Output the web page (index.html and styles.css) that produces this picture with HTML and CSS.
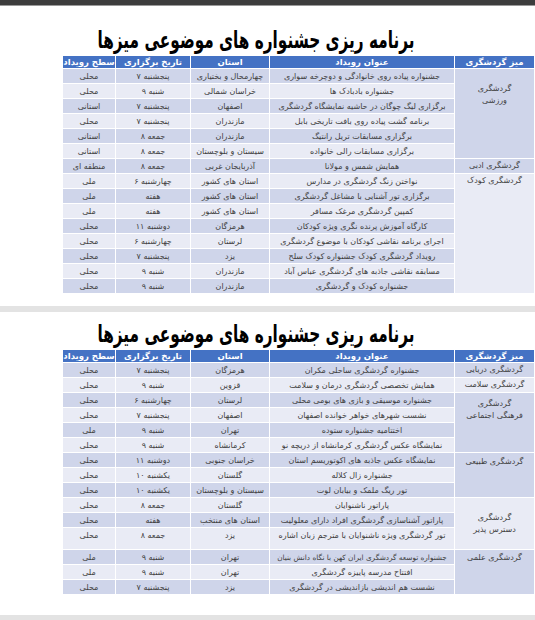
FILE: index.html
```html
<!DOCTYPE html>
<html lang="fa" dir="rtl">
<head>
<meta charset="utf-8">
<title>برنامه ریزی جشنواره های موضوعی میزها</title>
<link rel="stylesheet" href="styles.css">
</head>
<body>
<div class="topbar"></div>

<section class="sheet sheet-first">
  <h1 class="title">برنامه ریزی جشنواره های موضوعی میزها</h1>
  <table class="plan">
    <colgroup>
      <col class="c-desk"><col class="c-event"><col class="c-prov"><col class="c-date"><col class="c-level">
    </colgroup>
    <thead>
      <tr><th>میز گردشگری</th><th>عنوان رویداد</th><th>استان</th><th>تاریخ برگزاری</th><th>سطح رویداد</th></tr>
    </thead>
    <tbody>
      <tr class="odd"><td class="group g-pad14" rowspan="6">گردشگری<br>ورزشی</td><td>جشنواره پیاده روی خانوادگی و دوچرخه سواری</td><td>چهارمحال و بختیاری</td><td>پنجشنبه ۷</td><td>محلی</td></tr>
      <tr class="even"><td>جشنواره بادبادک ها</td><td>خراسان شمالی</td><td>شنبه ۹</td><td>محلی</td></tr>
      <tr class="odd"><td>برگزاری لیگ چوگان در حاشیه نمایشگاه گردشگری</td><td>اصفهان</td><td>پنجشنبه ۷</td><td>استانی</td></tr>
      <tr class="even"><td>برنامه گشت پیاده روی بافت تاریخی بابل</td><td>مازندران</td><td>پنجشنبه ۷</td><td>محلی</td></tr>
      <tr class="odd"><td>برگزاری مسابقات تریل رانتیگ</td><td>مازندران</td><td>جمعه ۸</td><td>استانی</td></tr>
      <tr class="even"><td>برگزاری مسابقات رالی خانواده</td><td>سیستان و بلوچستان</td><td>جمعه ۸</td><td>استانی</td></tr>
      <tr class="odd"><td class="group">گردشگری ادبی</td><td>همایش شمس و مولانا</td><td>آذربایجان غربی</td><td>جمعه ۸</td><td>منطقه ای</td></tr>
      <tr class="even"><td class="group g-pad0" rowspan="8">گردشگری کودک</td><td>نواختن زنگ گردشگری در مدارس</td><td>استان های کشور</td><td>چهارشنبه ۶</td><td>ملی</td></tr>
      <tr class="odd"><td>برگزاری تور آشنایی با مشاغل گردشگری</td><td>استان های کشور</td><td>هفته</td><td>ملی</td></tr>
      <tr class="even"><td>کمپین گردشگری مرغک مسافر</td><td>استان های کشور</td><td>هفته</td><td>ملی</td></tr>
      <tr class="odd"><td>کارگاه آموزش پرنده نگری ویژه کودکان</td><td>هرمزگان</td><td>دوشنبه ۱۱</td><td>محلی</td></tr>
      <tr class="even"><td>اجرای برنامه نقاشی کودکان با موضوع گردشگری</td><td>لرستان</td><td>چهارشنبه ۶</td><td>محلی</td></tr>
      <tr class="odd"><td>رویداد گردشگری کودک جشنواره کودک سلح</td><td>یزد</td><td>پنجشنبه ۷</td><td>محلی</td></tr>
      <tr class="even"><td>مسابقه نقاشی جاذبه های گردشگری عباس آباد</td><td>مازندران</td><td>شنبه ۹</td><td>محلی</td></tr>
      <tr class="odd"><td>جشنواره کودک و گردشگری</td><td>مازندران</td><td>شنبه ۹</td><td>محلی</td></tr>
    </tbody>
  </table>
</section>

<div class="sep"></div>

<section class="sheet sheet-second">
  <h1 class="title">برنامه ریزی جشنواره های موضوعی میزها</h1>
  <table class="plan">
    <colgroup>
      <col class="c-desk"><col class="c-event"><col class="c-prov"><col class="c-date"><col class="c-level">
    </colgroup>
    <thead>
      <tr><th>میز گردشگری</th><th>عنوان رویداد</th><th>استان</th><th>تاریخ برگزاری</th><th>سطح رویداد</th></tr>
    </thead>
    <tbody>
      <tr class="odd"><td class="group">گردشگری دریایی</td><td>جشنواره گردشگری ساحلی مکران</td><td>هرمزگان</td><td>پنجشنبه ۷</td><td>محلی</td></tr>
      <tr class="even"><td class="group">گردشگری سلامت</td><td>همایش تخصصی گردشگری درمان و سلامت</td><td>قزوین</td><td>شنبه ۹</td><td>محلی</td></tr>
      <tr class="odd"><td class="group g-pad5" rowspan="4">گردشگری<br>فرهنگی اجتماعی</td><td>جشنواره موسیقی و بازی های بومی محلی</td><td>لرستان</td><td>چهارشنبه ۶</td><td>محلی</td></tr>
      <tr class="even"><td>نشست شهرهای خواهر خوانده اصفهان</td><td>اصفهان</td><td>پنجشنبه ۷</td><td>محلی</td></tr>
      <tr class="odd"><td>اختتامیه جشنواره ستوده</td><td>تهران</td><td>شنبه ۹</td><td>ملی</td></tr>
      <tr class="even"><td>نمایشگاه عکس گردشگری کرمانشاه از دریچه نو</td><td>کرمانشاه</td><td>شنبه ۹</td><td>محلی</td></tr>
      <tr class="odd"><td class="group g-pad3" rowspan="3">گردشگری طبیعی</td><td>نمایشگاه عکس جاذبه های اکوتوریسم استان</td><td>خراسان جنوبی</td><td>دوشنبه ۱۱</td><td>محلی</td></tr>
      <tr class="even"><td>جشنواره زال کلاله</td><td>گلستان</td><td>یکشنبه ۱۰</td><td>محلی</td></tr>
      <tr class="odd"><td>تور ریگ ملمک و بیابان لوت</td><td>سیستان و بلوچستان</td><td>یکشنبه ۱۰</td><td>محلی</td></tr>
      <tr class="even"><td class="group g-mid" rowspan="3">گردشگری<br>دسترس پذیر</td><td>پاراتور ناشنوایان</td><td>گلستان</td><td>جمعه ۸</td><td>محلی</td></tr>
      <tr class="odd"><td>پاراتور آشناسازی گردشگری افراد دارای معلولیت</td><td>استان های منتخب</td><td>هفته</td><td>محلی</td></tr>
      <tr class="even tall"><td class="top">تور گردشگری ویژه ناشنوایان با مترجم زبان اشاره</td><td class="top">یزد</td><td class="top">جمعه ۸</td><td class="top">محلی</td></tr>
      <tr class="odd"><td class="group g-pad2" rowspan="3">گردشگری علمی</td><td class="tight">جشنواره توسعه گردشگری ایران کهن با نگاه دانش بنیان</td><td>تهران</td><td>شنبه ۹</td><td>ملی</td></tr>
      <tr class="even"><td>افتتاح مدرسه پاییزه گردشگری</td><td>تهران</td><td>شنبه ۹</td><td>ملی</td></tr>
      <tr class="odd"><td>نشست هم اندیشی بازاندیشی در گردشگری</td><td>یزد</td><td>پنجشنبه ۷</td><td>محلی</td></tr>
    </tbody>
  </table>
</section>

<div class="sep sep-bottom"></div>
</body>
</html>
```

FILE: styles.css
```css
html, body {
  margin: 0;
  padding: 0;
  background: #ffffff;
}

body {
  font-family: "DejaVu Sans", "Noto Sans", sans-serif;
  color: #404040;
}

.topbar {
  height: 5px;
  background: #3d3d3d;
  border-bottom: 1px solid #9a9a9a;
}

.sheet {
  display: flex;
  flex-direction: column;
  align-items: flex-start;
}

.sheet-first {
  padding-top: 20px;
  padding-bottom: 12px;
}

.sheet-second {
  padding-top: 8px;
  padding-bottom: 20px;
}

.title {
  align-self: stretch;
  margin: 0 23px 0 0;
  text-align: center;
  font-family: "DejaVu Sans Condensed", "DejaVu Sans", sans-serif;
  font-size: 17px;
  line-height: 29px;
  font-weight: bold;
  color: #000000;
  direction: rtl;
  white-space: nowrap;
  transform: scale(1, 1.4);
}

.plan {
  margin-left: 25px;
  width: 472px;
  table-layout: fixed;
  border-collapse: collapse;
  direction: rtl;
  font-size: 8px;
}

.c-desk { width: 80px; }
.c-event { width: 185px; }
.c-prov { width: 79px; }
.c-date { width: 75px; }
.c-level { width: 53px; }

.plan th {
  background: #4472c4;
  color: #ffffff;
  font-weight: bold;
  font-size: 8.5px;
  height: 12px;
  padding: 0;
  border: 1px solid #ffffff;
  text-align: center;
  line-height: 11px;
  white-space: nowrap;
}

.plan td {
  height: 14px;
  padding: 0 2px;
  border: 1px solid #ffffff;
  text-align: center;
  vertical-align: middle;
  line-height: 11px;
  white-space: nowrap;
  overflow: hidden;
}

.plan td.tight {
  padding: 0;
  font-size: 7.3px;
}

.plan tr.odd td { background: #cfd5ea; }
.plan tr.even td { background: #e9ebf5; }

.plan tr.tall td { height: 19px; }
.plan td.top { vertical-align: top; padding-top: 2px; }

.plan td.group {
  white-space: normal;
  line-height: 12px;
}

.plan td.g-pad14 { vertical-align: top; padding-top: 14px; }
.plan td.g-pad0 { vertical-align: top; padding-top: 1px; }
.plan td.g-pad5 { vertical-align: top; padding-top: 5px; }
.plan td.g-pad3 { vertical-align: top; padding-top: 3px; }
.plan td.g-pad2 { vertical-align: top; padding-top: 2px; }
.plan td.g-mid { vertical-align: middle; }

.sep {
  height: 6px;
  background: #e3e3e3;
}

.sep-bottom {
  height: 10px;
}
```
